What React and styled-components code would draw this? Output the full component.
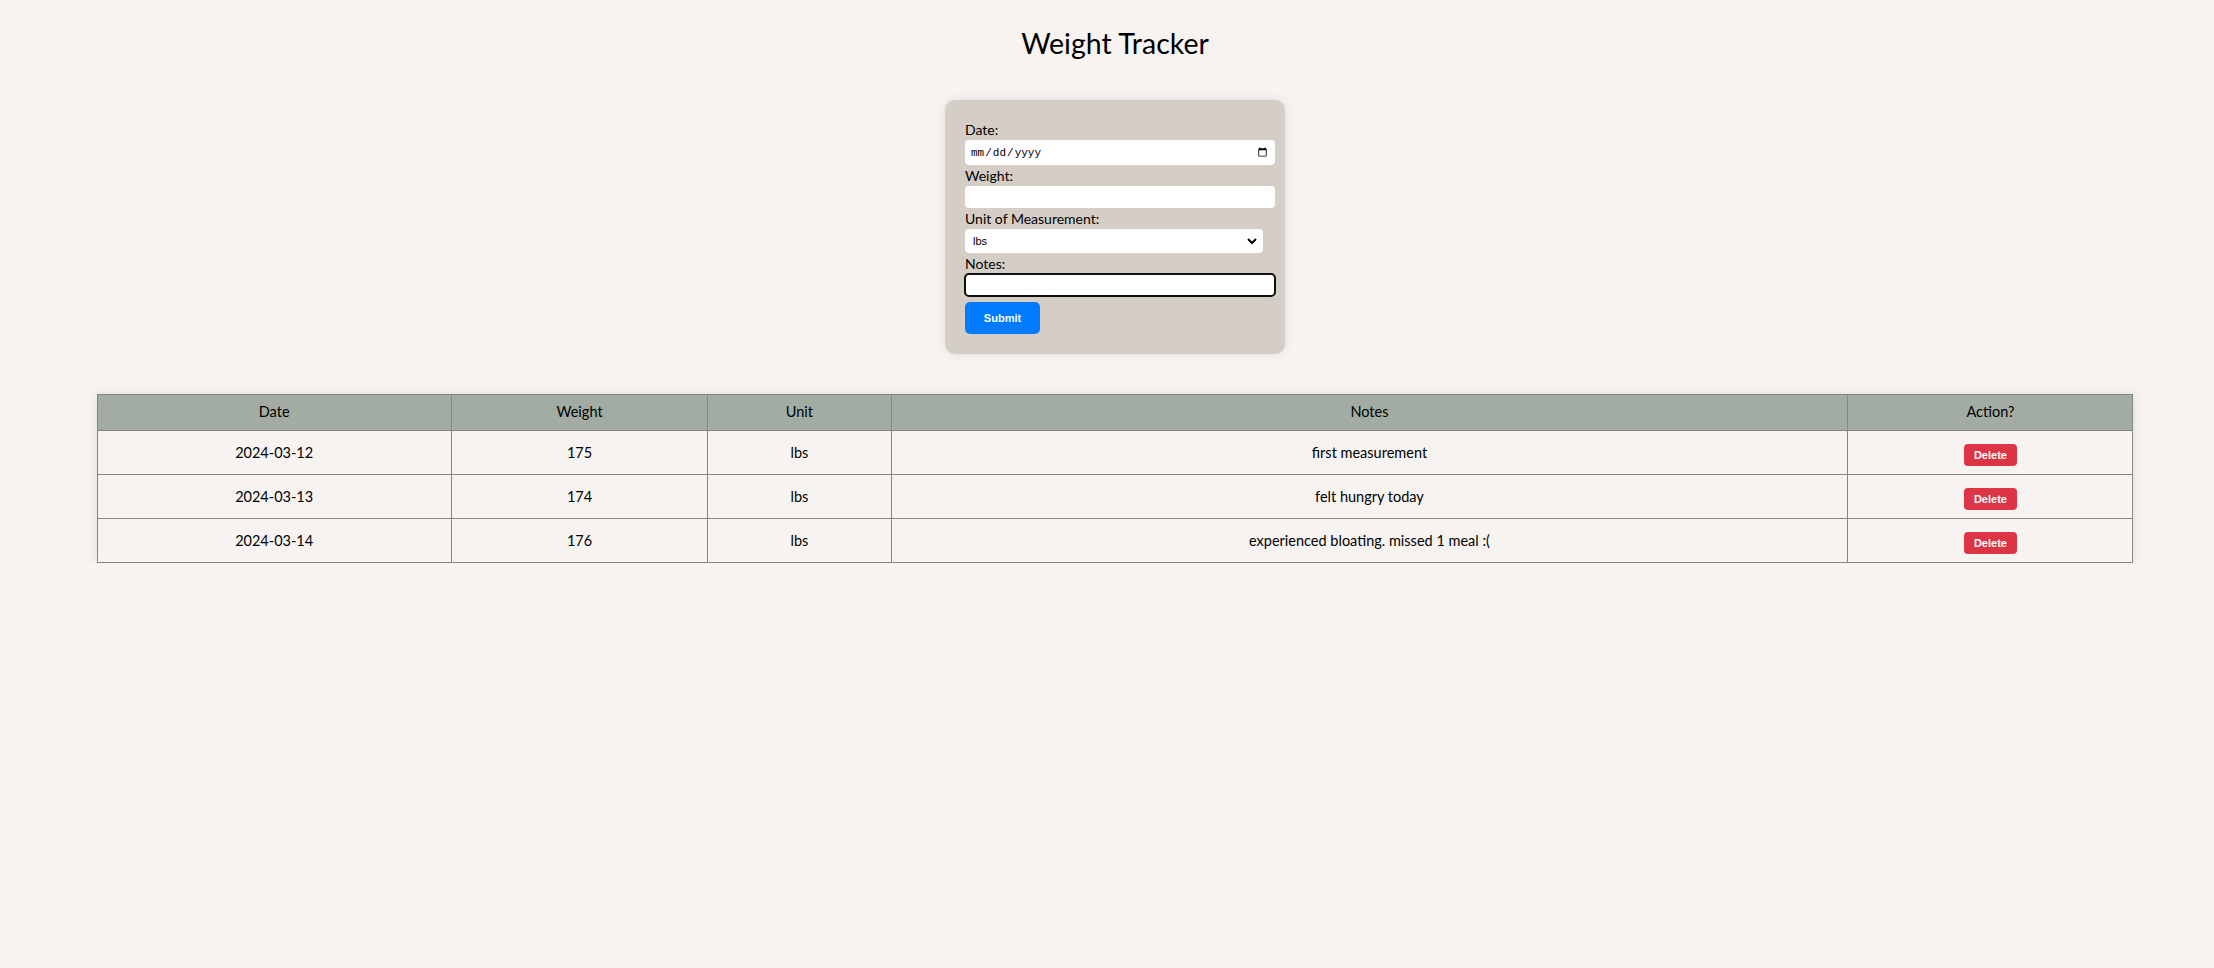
import React from 'react';
import styled, { createGlobalStyle } from 'styled-components';

const GlobalStyle = createGlobalStyle`
  html, body {
    background: #f6f3f0;
    overflow-x: hidden;
  }

  body {
    margin: 8px;
    font-family: Lato, "Noto Sans", sans-serif;
    color: #000;
  }
`;

const Page = styled.div`
  width: 100vw;
  display: flex;
  flex-direction: column;
  align-items: center;
`;

const Title = styled.h1`
  margin: 15px 0 0;
  font-size: 28.5px;
  font-weight: 400;
  line-height: 40px;
`;

const Card = styled.form`
  margin-top: 37px;
  width: 340px;
  box-sizing: border-box;
  padding: 19px 20px 20px;
  background: #d5cec7;
  border-radius: 10px;
  box-shadow: 0 0 10px rgba(0, 0, 0, 0.1);
  display: flex;
  flex-direction: column;
  align-items: flex-start;
`;

const Label = styled.label`
  display: block;
  font-size: 14px;
  line-height: 21px;
  height: 21px;
`;

const Input = styled.input`
  width: 310px;
  height: ${(p) => p.$h}px;
  box-sizing: border-box;
  margin: 0;
  padding: 0 5px;
  border: none;
  border-radius: 4px;
  background: #fff;
  font-family: ${(p) => (p.type === 'date' ? '"Liberation Mono", monospace' : '"Liberation Sans", sans-serif')};
  font-size: ${(p) => (p.type === 'date' ? '11px' : '13px')};
  color: #000;
  outline: ${(p) => (p.$focused ? '2px solid #101010' : 'none')};
  outline-offset: -1px;
`;

const SelectWrap = styled.div`
  position: relative;
  width: 298px;
  height: 24px;
`;

const Select = styled.select`
  appearance: none;
  width: 100%;
  height: 100%;
  box-sizing: border-box;
  margin: 0;
  padding: 0 8px;
  border: none;
  border-radius: 4px;
  background: #fff;
  font-family: "Liberation Sans", sans-serif;
  font-size: 11px;
  color: #000;
`;

const Chevron = styled.svg`
  position: absolute;
  right: 6px;
  top: 8px;
  pointer-events: none;
`;

const SubmitButton = styled.button`
  margin-top: 6px;
  width: 75px;
  height: 32px;
  border: none;
  border-radius: 5px;
  background: #007bff;
  color: #fff;
  font-family: "Liberation Sans", sans-serif;
  font-size: 11px;
  font-weight: 700;
`;

const Table = styled.table`
  margin-top: 40px;
  width: 92%;
  border-collapse: collapse;
  box-shadow: 0 0 10px rgba(0, 0, 0, 0.1);
`;

const Th = styled.th`
  width: ${(p) => p.$w};
  padding: 7px 8px 8px;
  background: #a2aca2;
  border: 1px solid #858585;
  font-size: 14.5px;
  font-weight: 400;
  line-height: 20px;
`;

const Td = styled.td`
  padding: ${(p) => (p.$action ? '13px 8px 8px' : '12px 8px 11px')};
  border: 1px solid #858585;
  text-align: center;
  font-size: 14.5px;
  line-height: 20px;
`;

const DeleteButton = styled.button`
  display: block;
  margin: 0 auto;
  height: 22px;
  padding: 0 10px;
  border: none;
  border-radius: 4px;
  background: #dc3545;
  color: #fff;
  font-family: "Liberation Sans", sans-serif;
  font-size: 11px;
  font-weight: 700;
`;

const entries = [
  { date: '2024-03-12', weight: 175, unit: 'lbs', notes: 'first measurement' },
  { date: '2024-03-13', weight: 174, unit: 'lbs', notes: 'felt hungry today' },
  { date: '2024-03-14', weight: 176, unit: 'lbs', notes: 'experienced bloating. missed 1 meal :(' },
];

export default function App() {
  return (
    <Page>
      <GlobalStyle />
      <Title>Weight Tracker</Title>
      <Card onSubmit={(e) => e.preventDefault()}>
        <Label>Date:</Label>
        <Input type="date" $h={25} />
        <Label>Weight:</Label>
        <Input type="text" $h={22} />
        <Label>Unit of Measurement:</Label>
        <SelectWrap>
          <Select defaultValue="lbs">
            <option value="lbs">lbs</option>
            <option value="kg">kg</option>
          </Select>
          <Chevron width="10" height="8" viewBox="0 0 10 8">
            <path d="M1 2 L5 6 L9 2" fill="none" stroke="#000" strokeWidth="2" />
          </Chevron>
        </SelectWrap>
        <Label>Notes:</Label>
        <Input type="text" $h={22} $focused />
        <SubmitButton type="submit">Submit</SubmitButton>
      </Card>
      <Table>
        <thead>
          <tr>
            <Th $w="17.4%">Date</Th>
            <Th $w="12.6%">Weight</Th>
            <Th $w="9%">Unit</Th>
            <Th $w="47%">Notes</Th>
            <Th $w="14%">Action?</Th>
          </tr>
        </thead>
        <tbody>
          {entries.map((entry) => (
            <tr key={entry.date}>
              <Td>{entry.date}</Td>
              <Td>{entry.weight}</Td>
              <Td>{entry.unit}</Td>
              <Td>{entry.notes}</Td>
              <Td $action>
                <DeleteButton type="button">Delete</DeleteButton>
              </Td>
            </tr>
          ))}
        </tbody>
      </Table>
    </Page>
  );
}
